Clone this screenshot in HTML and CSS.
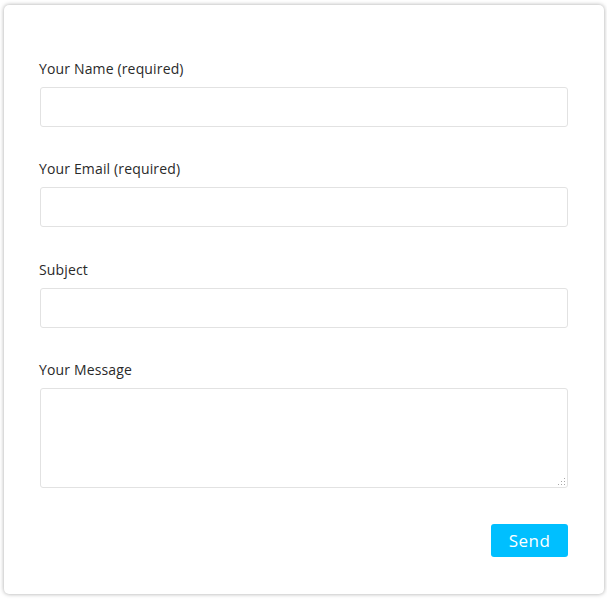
FILE: index.html
```html
<!DOCTYPE html>
<html>
<head>
<meta charset="utf-8">
<link rel="stylesheet" href="styles.css">
</head>
<body>
<form class="card">
  <div class="field">
    <label class="label">Your Name (required)</label>
    <input class="input" type="text">
  </div>
  <div class="field field-wide">
    <label class="label">Your Email (required)</label>
    <input class="input" type="text">
  </div>
  <div class="field">
    <label class="label">Subject</label>
    <input class="input" type="text">
  </div>
  <div class="field field-last">
    <label class="label">Your Message</label>
    <div class="textarea-wrap">
      <textarea class="textarea"></textarea>
      <svg class="grip" width="9" height="9" viewBox="0 0 9 9">
        <rect x="7" y="1" width="1" height="1" fill="#a8a8a8"/>
        <rect x="4" y="4" width="1" height="1" fill="#a8a8a8"/>
        <rect x="7" y="4" width="1" height="1" fill="#a8a8a8"/>
        <rect x="1" y="7" width="1" height="1" fill="#a8a8a8"/>
        <rect x="4" y="7" width="1" height="1" fill="#a8a8a8"/>
        <rect x="7" y="7" width="1" height="1" fill="#a8a8a8"/>
      </svg>
    </div>
  </div>
  <div class="actions">
    <button class="btn" type="button">Send</button>
  </div>
</form>
</body>
</html>
```
FILE: styles.css
```css
html, body {
  margin: 0;
  padding: 0;
  background: #fff;
}
body {
  padding: 5px 3px 5px 4px;
  font-family: "Open Sans", sans-serif;
  color: #2a2a2a;
}
.card {
  width: 600px;
  height: 589px;
  box-sizing: border-box;
  background: #fff;
  border-radius: 5px;
  box-shadow: 0 0 4px rgba(0,0,0,0.35);
  padding: 54px 36px 0 36px;
}
.field {
  display: flex;
  flex-direction: column;
  gap: 8px;
  margin-bottom: 32px;
}
.field-wide { margin-bottom: 33px; }
.field-last { margin-bottom: 36px; }
.label {
  font-size: 14px;
  line-height: 20px;
  letter-spacing: 0.15px;
  margin-left: -1px;
}
.input, .textarea {
  display: block;
  box-sizing: border-box;
  width: 528px;
  border: 1px solid #e2e2e2;
  border-radius: 3px;
  background: #fff;
  margin: 0;
  font-family: inherit;
  outline: none;
}
.input { height: 40px; }
.textarea-wrap {
  position: relative;
  width: 528px;
  height: 100px;
}
.textarea { height: 100px; resize: none; }
.grip {
  position: absolute;
  right: 2px;
  bottom: 2px;
}
.actions {
  display: flex;
  justify-content: flex-end;
  width: 528px;
}
.btn {
  width: 77px;
  height: 33px;
  border: 0;
  border-radius: 3px;
  background: #00bfff;
  color: #fff;
  font-family: "Open Sans", sans-serif;
  font-size: 17px;
  letter-spacing: 0.5px;
  padding: 0;
}
```
